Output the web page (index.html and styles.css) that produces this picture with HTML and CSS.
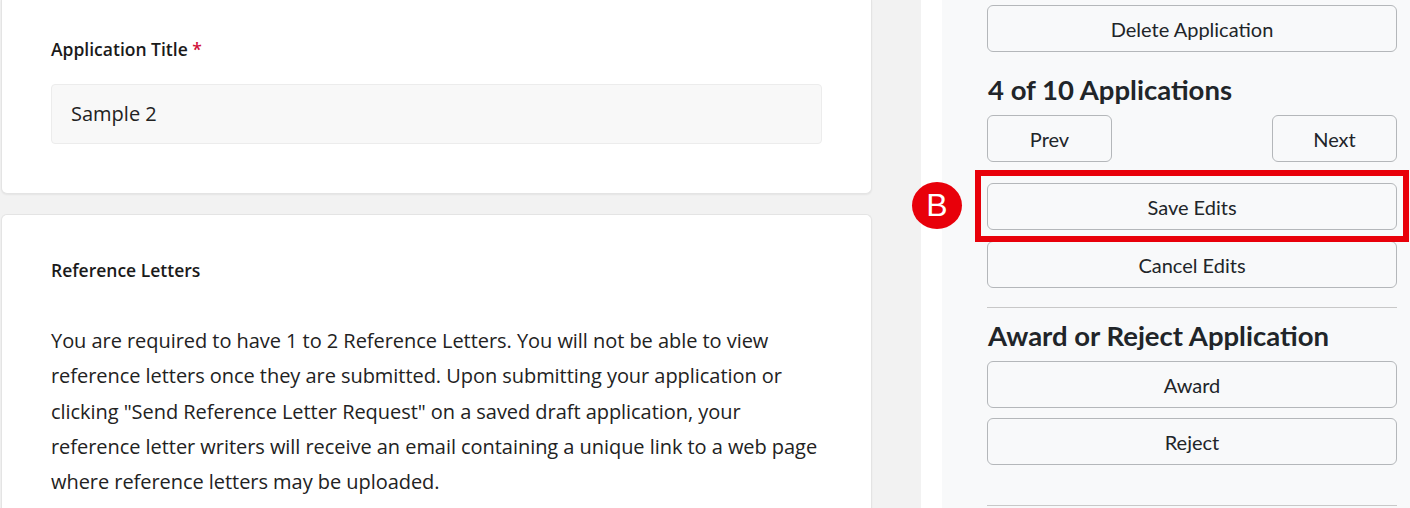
FILE: index.html
```html
<!DOCTYPE html>
<html lang="en">
<head>
<meta charset="utf-8">
<title>Application</title>
<link rel="stylesheet" href="styles.css">
</head>
<body>
<div class="layout">
  <main class="main">
    <section class="card card-top">
      <label class="field-label">Application Title <span class="req">*</span></label>
      <div class="input">Sample 2</div>
    </section>
    <section class="card card-refs">
      <h4 class="section-title">Reference Letters</h4>
      <p class="para">You are required to have 1 to 2 Reference Letters. You will not be able to view reference letters once they are submitted. Upon submitting your application or clicking "Send Reference Letter Request" on a saved draft application, your reference letter writers will receive an email containing a unique link to a web page where reference letters may be uploaded.</p>
    </section>
  </main>
  <aside class="side">
    <div class="panel">
      <button class="btn btn-delete">Delete Application</button>
      <h3 class="panel-title">4 of 10 Applications</h3>
      <div class="pager">
        <button class="btn btn-small">Prev</button>
        <button class="btn btn-small">Next</button>
      </div>
      <div class="highlight">
        <button class="btn">Save Edits</button>
        <span class="badge">B</span>
      </div>
      <button class="btn btn-cancel">Cancel Edits</button>
      <hr class="rule rule-1">
      <h3 class="panel-title panel-title-2">Award or Reject Application</h3>
      <button class="btn">Award</button>
      <button class="btn btn-reject">Reject</button>
      <hr class="rule rule-2">
    </div>
  </aside>
</div>
</body>
</html>
```
FILE: styles.css
```css
* { box-sizing: border-box; }
html, body { margin: 0; padding: 0; }
body {
  background: #f2f2f2;
  font-family: "Open Sans", "Noto Sans", sans-serif;
  color: #212529;
  width: 1410px;
  height: 508px;
  overflow: hidden;
}
.layout {
  display: flex;
  align-items: flex-start;
  height: 508px;
}
.main {
  width: 872px;
  padding-left: 1px;
  display: flex;
  flex-direction: column;
  gap: 20px;
}
.card {
  background: #fff;
  border: 1px solid #e4e4e4;
  box-shadow: 0 1px 2px rgba(0,0,0,0.06);
  padding: 0 49px 0 49px;
}
.card-top {
  border-top: none;
  border-radius: 0 0 6px 6px;
  padding-top: 36px;
  height: 194px;
}
.card-refs {
  border-radius: 6px 6px 0 0;
  border-bottom: none;
  padding-top: 42px;
  height: 310px;
}
.field-label {
  display: block;
  font-size: 17.5px;
  font-weight: 600;
  line-height: 26px;
  margin: 0 0 22px;
  color: #1a1a1a;
}
.req { color: #d0103a; }
.input {
  height: 60px;
  background: #f8f8f8;
  border: 1px solid #ececec;
  border-radius: 4px;
  padding: 0 19px;
  font-size: 20px;
  line-height: 58px;
  color: #222;
}
.section-title {
  font-size: 17.5px;
  font-weight: 600;
  margin: 0 0 40px;
  line-height: 26px;
  color: #1a1a1a;
}
.para {
  margin: 0;
  font-size: 20px;
  line-height: 35.3px;
  color: #222;
  width: 778px;
  letter-spacing: -0.05px;
}
.side {
  margin-left: 49px;
  background: #fff;
  padding-left: 21px;
  flex: 1;
  height: 508px;
}
.panel {
  background: #f8f9fa;
  height: 508px;
  padding: 5px 13px 0 45px;
  display: flex;
  flex-direction: column;
  font-family: "Lato", "Noto Sans", sans-serif;
}
.btn {
  display: block;
  width: 100%;
  height: 47px;
  background: #f8f9fa;
  border: 1px solid #b4b7ba;
  border-radius: 6px;
  font-family: inherit;
  font-size: 20px;
  color: #212529;
  padding: 0;
  cursor: pointer;
}
.btn-delete { margin-bottom: 21px; }
.panel-title {
  margin: 0 0 8px;
  font-size: 27.5px;
  font-weight: 700;
  line-height: 34px;
  color: #212529;
  padding-left: 1px;
}
.pager {
  display: flex;
  justify-content: space-between;
  margin-bottom: 21px;
}
.btn-small { width: 125px; }
.highlight {
  position: relative;
}
.highlight::after {
  content: "";
  position: absolute;
  left: -12px;
  right: -12px;
  top: -13px;
  bottom: -12px;
  border: 6px solid #e8000a;
  pointer-events: none;
}
.badge {
  position: absolute;
  left: -75px;
  top: -1px;
  width: 50px;
  height: 47px;
  border-radius: 50%;
  background: #e8000a;
  color: #fff;
  font-family: "Liberation Sans", Arial, sans-serif;
  font-size: 32px;
  line-height: 47px;
  text-align: center;
}
.btn-cancel { margin-top: 11px; }
.rule {
  border: none;
  border-top: 1px solid #c8c8c8;
  margin: 0;
  width: 100%;
}
.rule-1 { margin-top: 19px; margin-bottom: 11px; }
.btn-reject { margin-top: 10px; }
.rule-2 { margin-top: 40px; }
```
